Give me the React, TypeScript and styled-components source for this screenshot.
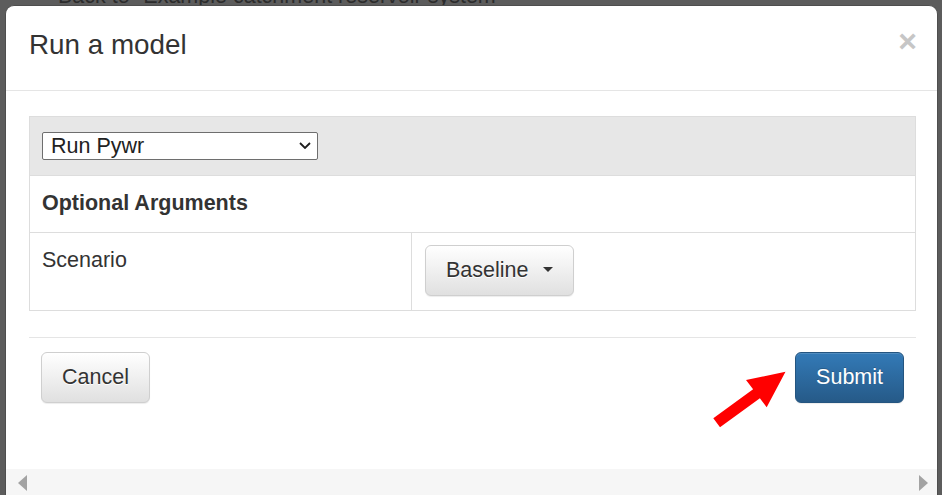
import React from 'react';
import styled, { createGlobalStyle, css } from 'styled-components';

const GlobalStyle = createGlobalStyle`
  html, body {
    margin: 0;
    padding: 0;
  }
  body {
    font-family: "Liberation Sans", Arial, Helvetica, sans-serif;
    background: #5c5c5c;
    overflow: hidden;
  }
`;

const App: React.FunctionComponent = () => {
  return (
    <Page>
      <GlobalStyle />
      <BackLink>Back to "Example catchment reservoir system"</BackLink>
      <Modal>
        <ModalHeader>
          <ModalTitle>Run a model</ModalTitle>
          <CloseButton aria-label="Close">×</CloseButton>
        </ModalHeader>
        <ModalBody>
          <TableBox>
            <Row $shade>
              <SelectWrap>
                <AppSelect defaultValue="pywr">
                  <option value="pywr">Run Pywr</option>
                </AppSelect>
                <SelectChevron viewBox="0 0 12 7">
                  <path d="M1 1 L6 6 L11 1" />
                </SelectChevron>
              </SelectWrap>
            </Row>
            <Row>
              <HeadingCell>Optional Arguments</HeadingCell>
            </Row>
            <ArgRow>
              <Cell>Scenario</Cell>
              <Cell $divided>
                <Button>
                  Baseline
                  <Caret />
                </Button>
              </Cell>
            </ArgRow>
          </TableBox>
          <ModalFooter>
            <Button>Cancel</Button>
            <Button $primary>Submit</Button>
          </ModalFooter>
        </ModalBody>
        <ScrollBar>
          <ScrollArrow $dir="left" />
          <ScrollArrow $dir="right" />
        </ScrollBar>
      </Modal>
      {/* red annotation arrow pointing at Submit */}
      <PointerArrow viewBox="0 0 84 66">
        <polygon points="5.3,52.3 45.1,23.3 38,14 77.5,5.7 58.7,41.3 51.9,32.3 12,61.3" />
      </PointerArrow>
    </Page>
  );
};

const Page = styled.div`
  position: relative;
  width: 942px;
  height: 495px;
  overflow: hidden;
  background: #5c5c5c;
`;

const BackLink = styled.div`
  margin-top: -16px;
  padding-left: 58px;
  font-size: 21.5px;
  line-height: 24px;
  color: #2c2c2c;
  white-space: nowrap;
`;

const Modal = styled.div`
  position: absolute;
  top: 5px;
  left: 5px;
  right: 4px;
  bottom: 0;
  display: flex;
  flex-direction: column;
  background: #fff;
  border: 1px solid #4e4e4e;
  border-bottom: 0;
  border-radius: 9px 9px 0 0;
  overflow: hidden;
  color: #333;
`;

const ModalHeader = styled.div`
  display: flex;
  justify-content: space-between;
  align-items: flex-start;
  box-sizing: border-box;
  height: 85px;
  padding: 19px 20px 0 23px;
  border-bottom: 1px solid #e5e5e5;
`;

const ModalTitle = styled.h4`
  margin: 0;
  font-size: 27.8px;
  line-height: 40px;
  font-weight: 400;
  color: #333;
`;

const CloseButton = styled.button`
  margin-top: 0;
  padding: 0;
  border: 0;
  background: none;
  font-family: "Liberation Sans", Arial, sans-serif;
  font-size: 32px;
  font-weight: 700;
  line-height: 1;
  color: #c6c6c6;
`;

const ModalBody = styled.div`
  padding: 25px 21px 0 23px;
`;

const TableBox = styled.div`
  border: 1px solid #dddddd;
  font-size: 21.5px;
  line-height: 30.7px;
`;

const Row = styled.div<{ $shade?: boolean }>`
  box-sizing: border-box;
  height: ${(p) => (p.$shade ? 59 : 57)}px;
  padding: ${(p) => (p.$shade ? '14px 12px 0' : '12px 12px 0')};
  border-bottom: 1px solid #dddddd;
  background: ${(p) => (p.$shade ? '#e7e7e7' : '#fff')};
`;

const HeadingCell = styled.div`
  font-weight: 700;
`;

const ArgRow = styled.div`
  display: grid;
  grid-template-columns: 381px 1fr;
  height: 77px;
`;

const Cell = styled.div<{ $divided?: boolean }>`
  padding: ${(p) => (p.$divided ? '12px 13px' : '12px 12px')};
  ${(p) =>
    p.$divided &&
    css`
      border-left: 1px solid #dddddd;
    `}
`;

const SelectWrap = styled.div`
  position: relative;
  width: 276px;
  height: 28px;
`;

const AppSelect = styled.select`
  appearance: none;
  -webkit-appearance: none;
  box-sizing: border-box;
  width: 100%;
  height: 28px;
  margin: 0;
  padding: 0 0 0 8px;
  border: 1px solid #6e6e6e;
  border-radius: 2px;
  background: #fff;
  font-family: "Liberation Sans", Arial, sans-serif;
  font-size: 21.5px;
  line-height: 26px;
  color: #222;
`;

const SelectChevron = styled.svg`
  position: absolute;
  right: 7px;
  top: 11px;
  width: 12px;
  height: 7px;
  pointer-events: none;
  fill: none;
  stroke: #1e1e1e;
  stroke-width: 1.8;
`;

const Button = styled.button<{ $primary?: boolean }>`
  box-sizing: border-box;
  height: 51px;
  margin: 0;
  padding: 9px 20px;
  border: 1px solid;
  border-radius: 6px;
  font-family: "Liberation Sans", Arial, sans-serif;
  font-size: 21.5px;
  line-height: 30.7px;
  white-space: nowrap;
  ${(p) =>
    p.$primary
      ? css`
          color: #fff;
          border-color: #245580;
          background-image: linear-gradient(to bottom, #337ab7 0%, #265a88 100%);
          text-shadow: 0 -1px 0 rgba(0, 0, 0, 0.2);
        `
      : css`
          color: #333;
          border-color: #cfcfcf;
          background-image: linear-gradient(to bottom, #ffffff 0%, #e0e0e0 100%);
          text-shadow: 0 1px 0 #fff;
        `}
  box-shadow: inset 0 1px 0 rgba(255, 255, 255, 0.15), 0 1px 1px rgba(0, 0, 0, 0.075);
`;

const Caret = styled.span`
  display: inline-block;
  width: 0;
  height: 0;
  margin-left: 15px;
  margin-bottom: 3px;
  vertical-align: middle;
  border-top: 5px solid #333;
  border-left: 5px solid transparent;
  border-right: 5px solid transparent;
`;

const ModalFooter = styled.div`
  display: flex;
  justify-content: space-between;
  margin-top: 26px;
  padding: 14px 12px 0;
  border-top: 1px solid #e5e5e5;
`;

const ScrollBar = styled.div`
  display: flex;
  justify-content: space-between;
  align-items: center;
  margin-top: auto;
  height: 25px;
  padding: 1px 9px 0 12px;
  background: #f6f6f6;
`;

const ScrollArrow = styled.span<{ $dir: 'left' | 'right' }>`
  width: 0;
  height: 0;
  border-top: 8px solid transparent;
  border-bottom: 8px solid transparent;
  ${(p) =>
    p.$dir === 'left'
      ? css`
          border-right: 9px solid #a3a3a3;
        `
      : css`
          border-left: 9px solid #a3a3a3;
        `}
`;

const PointerArrow = styled.svg`
  position: absolute;
  left: 708px;
  top: 366px;
  width: 84px;
  height: 66px;
  fill: #ff0000;
`;

export default App;
